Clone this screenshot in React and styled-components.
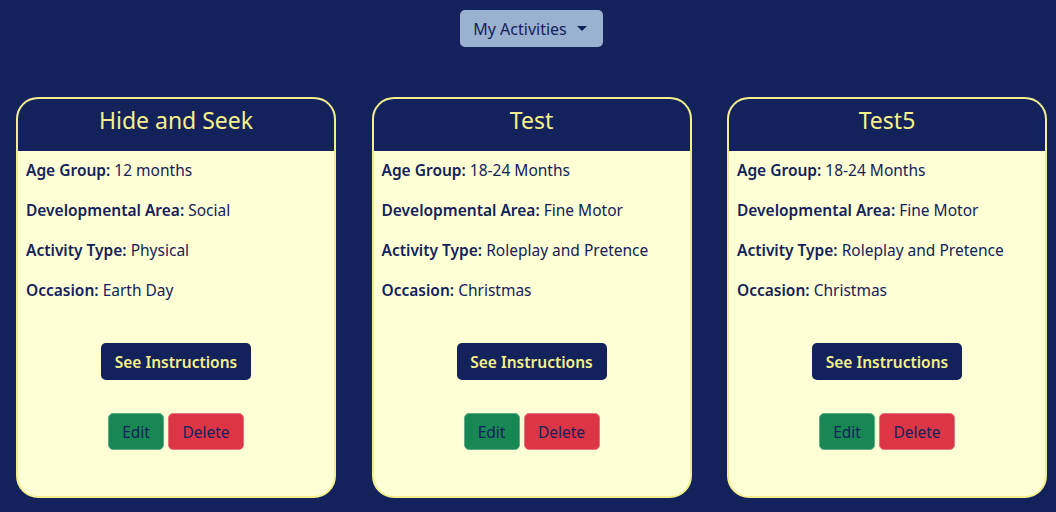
import React from 'react';
import styled, { createGlobalStyle } from 'styled-components';

const GlobalStyle = createGlobalStyle`
    body {
        margin: 0;
        background: #13225a;
        font-family: "Noto Sans", "Open Sans", sans-serif;
    }
`;

const Page = styled.div`
    display: flex;
    flex-direction: column;
    align-items: center;
    padding: 10px 0 0 16px;
    height: 512px;
    box-sizing: border-box;
`;

const DropdownButton = styled.button`
    display: flex;
    align-items: center;
    gap: 10px;
    height: 37px;
    padding: 0 16px 0 13px;
    margin-right: 9px;
    background: #9bb1d0;
    color: #13225a;
    border: none;
    border-radius: 5px;
    font-family: inherit;
    font-size: 16px;

    &:after {
        content: '';
        border-top: 5px solid #13225a;
        border-left: 5px solid transparent;
        border-right: 5px solid transparent;
    }
`;

const CardRow = styled.div`
    display: flex;
    gap: 35.5px;
    margin-top: 50px;
    width: 100%;
`;

const Card = styled.div`
    display: flex;
    flex-direction: column;
    flex-shrink: 0;
    width: 320px;
    height: 401px;
    box-sizing: border-box;
    border: 2px solid #f2ee8a;
    border-radius: 22px;
    background: #ffffd6;
    overflow: hidden;
`;

const CardHeader = styled.h2`
    margin: 0;
    height: 52px;
    background: #13225a;
    color: #f5f08c;
    font-weight: 400;
    font-size: 23px;
    text-align: center;
    padding-top: 5px;
    box-sizing: border-box;
`;

const Details = styled.div`
    display: flex;
    flex-direction: column;
    gap: 20px;
    padding: 9px 8px 0;
    color: #13225a;
    font-size: 15.5px;
    line-height: 20px;
`;

const Line = styled.div`
    b {
        font-weight: 600;
    }
`;

const Actions = styled.div`
    display: flex;
    flex-direction: column;
    align-items: center;
    gap: 33px;
    margin-top: 43px;
`;

const InstructionsButton = styled.button`
    width: 150px;
    height: 37px;
    background: #13225a;
    color: #f5f08c;
    border: none;
    border-radius: 5px;
    font-family: inherit;
    font-weight: 600;
    font-size: 15.5px;
`;

const ButtonGroup = styled.div`
    display: flex;
    gap: 4px;
`;

const ActionButton = styled.button`
    height: 37px;
    padding: 0;
    background: ${p => (p.$danger ? '#dc3545' : '#198754')};
    color: #13225a;
    border: 1px solid ${p => (p.$danger ? '#e8747f' : '#5fae8a')};
    border-radius: 5px;
    font-family: inherit;
    font-size: 15.5px;
    width: ${p => (p.$danger ? '76px' : '56px')};
`;

const activities = [
    { title: 'Hide and Seek', age: '12 months', area: 'Social', type: 'Physical', occasion: 'Earth Day' },
    { title: 'Test', age: '18-24 Months', area: 'Fine Motor', type: 'Roleplay and Pretence', occasion: 'Christmas' },
    { title: 'Test5', age: '18-24 Months', area: 'Fine Motor', type: 'Roleplay and Pretence', occasion: 'Christmas' },
];

function App() {
    return (
        <Page>
            <GlobalStyle />
            <DropdownButton>My Activities</DropdownButton>
            <CardRow>
                {activities.map(a => (
                    <Card key={a.title}>
                        <CardHeader>{a.title}</CardHeader>
                        <Details>
                            <Line><b>Age Group:</b> {a.age}</Line>
                            <Line><b>Developmental Area:</b> {a.area}</Line>
                            <Line><b>Activity Type:</b> {a.type}</Line>
                            <Line><b>Occasion:</b> {a.occasion}</Line>
                        </Details>
                        <Actions>
                            <InstructionsButton>See Instructions</InstructionsButton>
                            <ButtonGroup>
                                <ActionButton>Edit</ActionButton>
                                <ActionButton $danger>Delete</ActionButton>
                            </ButtonGroup>
                        </Actions>
                    </Card>
                ))}
            </CardRow>
        </Page>
    );
}

export default App;
